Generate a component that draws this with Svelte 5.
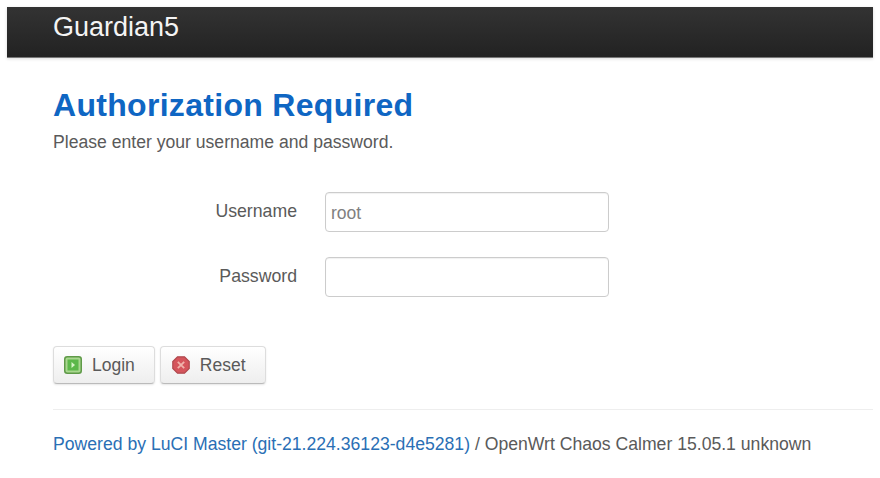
<script>
  let username = 'root';
  let password = '';
</script>

<div class="page">
  <header class="topbar">
    <span class="brand">Guardian5</span>
  </header>

  <main class="content">
    <h2>Authorization Required</h2>
    <p class="desc">Please enter your username and password.</p>

    <div class="fields">
      <div class="field">
        <label for="user">Username</label>
        <input id="user" type="text" bind:value={username} />
      </div>
      <div class="field">
        <label for="pass">Password</label>
        <input id="pass" type="password" bind:value={password} />
      </div>
    </div>

    <div class="actions">
      <button class="btn" type="button">
        <svg viewBox="0 0 18 18" width="18" height="18">
          <rect x="0.75" y="0.75" width="16.5" height="16.5" rx="2.5" fill="#a9d78f" stroke="#5f9a48" stroke-width="1.5" />
          <rect x="3.5" y="3.5" width="11" height="11" fill="#5cb84a" />
          <path d="M7.5 6 L11 9 L7.5 12 Z" fill="#d8f5c8" />
        </svg>
        <span>Login</span>
      </button>
      <button class="btn reset" type="button">
        <svg viewBox="0 0 18 18" width="18" height="18">
          <path d="M5.5 0.8 H12.5 L17.2 5.5 V12.5 L12.5 17.2 H5.5 L0.8 12.5 V5.5 Z" fill="#d5555c" stroke="#b04a4f" stroke-width="1.2" />
          <path d="M5.8 5.8 L12.2 12.2 M12.2 5.8 L5.8 12.2" stroke="#f0b4ac" stroke-width="1.8" />
        </svg>
        <span>Reset</span>
      </button>
    </div>

    <footer class="foot">
      <a href="#top">Powered by LuCI Master (git-21.224.36123-d4e5281)</a> / OpenWrt Chaos Calmer 15.05.1 unknown
    </footer>
  </main>
</div>

<style>
  :global(body) {
    background: #fff;
    font-family: "Liberation Sans", Arial, sans-serif;
    color: #5a5a5a;
  }

  .page {
    padding: 7px 7px 0;
  }

  .topbar {
    height: 51px;
    box-sizing: border-box;
    padding: 3px 0 0 46px;
    background: linear-gradient(#333, #222);
    border-bottom: 1px solid #777;
    box-shadow: 0 1px 3px rgba(0, 0, 0, 0.15);
  }

  .brand {
    font-size: 27px;
    line-height: 34px;
    color: #f4f4f4;
  }

  .content {
    padding: 29px 0 0 46px;
  }

  h2 {
    margin: 0;
    font-size: 32px;
    line-height: 36px;
    font-weight: bold;
    letter-spacing: 0.3px;
    color: #0f66c3;
  }

  .desc {
    margin: 9px 0 0;
    font-size: 17.6px;
    line-height: 20px;
    color: #5a5a5a;
  }

  .fields {
    margin-top: 40px;
    display: flex;
    flex-direction: column;
    gap: 25px;
  }

  .field {
    display: flex;
    align-items: center;
    gap: 28px;
  }

  label {
    width: 244px;
    text-align: right;
    font-size: 17.7px;
    line-height: 20px;
    margin-top: -3px;
    color: #5a5a5a;
  }

  input {
    width: 284px;
    height: 40px;
    box-sizing: border-box;
    padding: 2px 5px 0;
    border: 1px solid #ccc;
    border-radius: 4px;
    box-shadow: inset 0 1px 1px rgba(0, 0, 0, 0.06);
    font-family: inherit;
    font-size: 17.5px;
    color: #808080;
    background: #fff;
  }

  .actions {
    margin-top: 49px;
    display: flex;
    gap: 5px;
  }

  .btn {
    height: 38px;
    display: flex;
    align-items: center;
    gap: 10px;
    padding: 0 19px 0 10px;
    border: 1px solid #ddd;
    border-bottom-color: #bbb;
    border-radius: 4px;
    background: linear-gradient(#fff, #eee);
    box-shadow: 0 1px 2px rgba(0, 0, 0, 0.1);
    font-family: inherit;
    font-size: 17.5px;
    color: #5a5a5a;
  }

  .btn.reset {
    gap: 10px;
    padding-left: 11px;
  }

  .foot {
    margin-top: 25px;
    padding-top: 24px;
    border-top: 1px solid #eee;
    font-size: 17.63px;
    line-height: 20px;
    color: #5a5a5a;
  }

  .foot a {
    color: #2a6fb5;
    text-decoration: none;
  }
</style>
